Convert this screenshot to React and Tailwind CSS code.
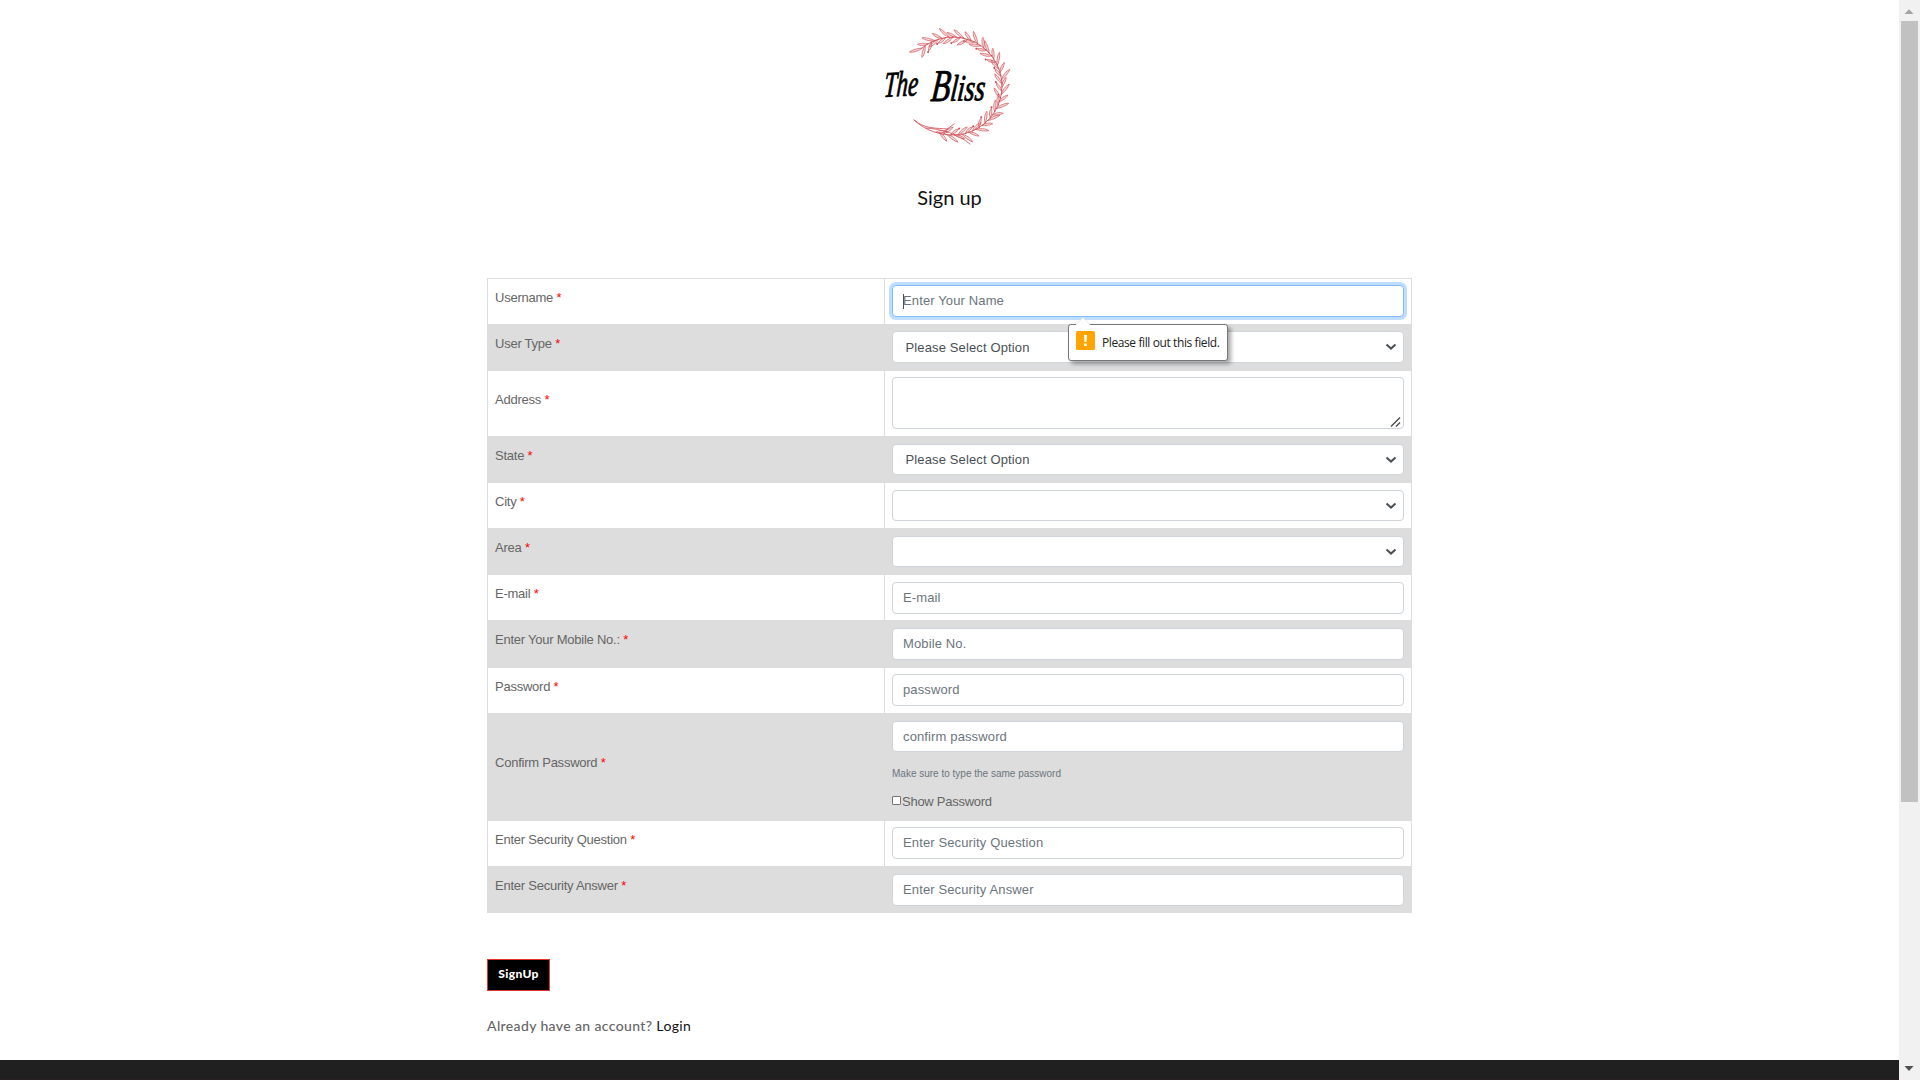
import React from "react";

const CX = 73;
const CY = 66;
const R = 49;
const LEAVES = [];
for (let i = 0; i < 56; i++) {
  const deg = 110 - i * 4.35;
  const a = (deg * Math.PI) / 180;
  const side = i % 2 ? 1 : -1;
  const len = 9.5 + ((i * 5) % 4) * 1.2;
  LEAVES.push({
    x: CX + R * Math.cos(a),
    y: CY + R * Math.sin(a),
    rot: deg - 90 + side * (22 + ((i * 7) % 5) * 6),
    len,
    bud: i % 4 === 0,
  });
}

function Logo() {
  return (
    <svg width="140" height="130" viewBox="0 0 140 130" className="absolute left-[880px] top-5 overflow-visible">
      <g fill="none" stroke="#cf4a50" strokeWidth="0.8" strokeLinecap="round">
        <path d="M34 100C46 111 60 115 73 115A49 49 0 1 0 42 28" />
        <path d="M34 100C44 109 56 108 68 109M46 108C62 109 78 114 90 124M62 113L74 104" />
        {LEAVES.map((l, i) => (
          <g key={i} transform={`translate(${l.x} ${l.y}) rotate(${l.rot})`}>
            <path
              d={`M0 0C3 -1.800 ${l.len - 3} -2 ${l.len} 0C${l.len - 3} 1.200 3 1 0 0Z`}
              fill="#e9a6a8"
              fillOpacity="0.4"
              strokeWidth="0.6"
            />
            {l.bud && <circle cx={l.len + 1} cy="0" r="1" fill="#cf4a50" stroke="none" />}
          </g>
        ))}
      </g>
      <g
        className="fill-black stroke-black font-['Liberation_Serif',serif] italic"
        strokeWidth="0.9"
        strokeLinejoin="round"
      >
        <text x="13" y="77" textLength="34" lengthAdjust="spacingAndGlyphs" transform="rotate(-3 3 77) skewX(-7)">
          <tspan fontSize="36">T</tspan>
          <tspan fontSize="36">he</tspan>
        </text>
        <text x="60" y="81" textLength="54" lengthAdjust="spacingAndGlyphs" transform="rotate(-1 50 80) skewX(-7)">
          <tspan fontSize="45">B</tspan>
          <tspan fontSize="37">liss</tspan>
        </text>
      </g>
    </svg>
  );
}

function Chevron() {
  return (
    <svg width="12" height="8" viewBox="0 0 12 8" className="pointer-events-none absolute right-[7px] top-3">
      <path d="M1.5 1.5L6 5.6L10.5 1.5" fill="none" stroke="#495057" strokeWidth="2" />
    </svg>
  );
}

const box =
  "block w-full rounded-[4px] border border-[#ced4da] bg-white text-[13px] tracking-[0.13px] text-[#495057] outline-none placeholder:text-[#6c757d] placeholder:opacity-100";

function Field({ placeholder, h, type }) {
  return <input type={type || "text"} placeholder={placeholder} className={`${box} ${h} px-[10px]`} />;
}

function Choice({ value, h }) {
  return (
    <div className="relative">
      <select className={`${box} ${h} appearance-none px-[12.5px]`}>
        <option>{value}</option>
      </select>
      <Chevron />
    </div>
  );
}

function Tooltip() {
  return (
    <div className="absolute left-[183px] top-[45px] z-10 flex h-[37px] w-[160px] rounded-[3px] border border-[#767676] bg-white shadow-[3px_3px_4px_rgba(0,0,0,0.35)]">
      <svg width="14" height="8" viewBox="0 0 14 8" className="absolute left-[7px] top-[-8px]">
        <path d="M0 7.5L7 0.5L14 7.5V8H0Z" fill="#fff" />
        <path d="M0 7.5L7 0.5L14 7.5" fill="none" stroke="#d6d6d6" strokeWidth="0.6" />
      </svg>
      <svg width="19" height="19" viewBox="0 0 19 19" className="ml-[7px] mt-[6px] shrink-0">
        <rect width="19" height="19" rx="1.5" fill="#ffa400" />
        <path d="M8 4h3l-.4 7H8.400z M8.200 12.500h2.600v2.500H8.200z" fill="#fff" />
      </svg>
      <span className="ml-[7px] mt-[9px] whitespace-nowrap font-['Open_Sans',sans-serif] text-[12px] leading-[18px] tracking-[-0.4px] text-[#222]">
        Please fill out this field.
      </span>
    </div>
  );
}

function Row({ label, h, grey, labelTop, top, children }) {
  return (
    <div className={`flex ${h} ${grey ? "bg-[#dddddd]" : "bg-white"}`}>
      <div className={`w-[397px] shrink-0 border-r border-[#dddddd] pl-[7px] ${labelTop}`}>
        <label className="block text-[13px] leading-5 tracking-[-0.24px] text-[#666666]">
          {label} <span className="text-[#ff0000]">*</span>
        </label>
      </div>
      <div className={`relative w-[526px] pl-[7px] pr-[7px] ${top}`}>{children}</div>
    </div>
  );
}

export default function App() {
  return (
    <div className="flex h-[1080px] w-[1920px] overflow-hidden bg-white font-['Liberation_Sans',Arial,sans-serif]">
      <div className="relative flex h-full w-[1899px] flex-col">
        <header className="h-[278px]">
          <Logo />
          <h1 className="pt-[183px] text-center font-[Lato,sans-serif] text-[20px] leading-[28px] text-[#111]">Sign up</h1>
        </header>
        <main className="mx-auto w-[925px] flex-1">
          <div className="border-x border-t border-[#dddddd]">
            <Row label="Username" h="h-[45px]" labelTop="pt-[9px]" top="pt-[6px]">
              <input
                type="text"
                placeholder="Enter Your Name"
                className="block h-8 w-full rounded-[4px] border border-[#80bdff] bg-white px-[10px] pb-[2px] text-[13px] tracking-[0.13px] shadow-[0_0_0_3px_#bfdeff] outline-none placeholder:text-[#6c757d] placeholder:opacity-100"
              />
              <span className="absolute left-[18px] top-[15px] h-[15px] w-px bg-[#495057]" />
              <Tooltip />
            </Row>
            <Row label="User Type" grey h="h-[47px]" labelTop="pt-[10px]" top="pt-[7px]">
              <Choice value="Please Select Option" h="h-8 pt-[2px]" />
            </Row>
            <Row label="Address" h="h-[65px]" labelTop="pt-[19px]" top="pt-[6px]">
              <div className="relative">
                <textarea className={`${box} h-[52px] resize-none`} />
                <svg width="12" height="12" viewBox="0 0 12 12" className="absolute bottom-[1px] right-[2px]">
                  <path d="M1 10.500L10 1.500M6 10.500L10 6.500" stroke="#505050" strokeWidth="1.500" />
                </svg>
              </div>
            </Row>
            <Row label="State" grey h="h-[47px]" labelTop="pt-[10px]" top="pt-2">
              <Choice value="Please Select Option" h="h-[31px]" />
            </Row>
            <Row label="City" h="h-[45px]" labelTop="pt-[9px]" top="pt-[7px]">
              <Choice value="" h="h-[31px]" />
            </Row>
            <Row label="Area" grey h="h-[47px]" labelTop="pt-[10px]" top="pt-2">
              <Choice value="" h="h-[31px]" />
            </Row>
            <Row label="E-mail" h="h-[45px]" labelTop="pt-[9px]" top="pt-[7px]">
              <Field placeholder="E-mail" h="h-8 pb-[2px]" />
            </Row>
            <Row label="Enter Your Mobile No.:" grey h="h-[48px]" labelTop="pt-[10px]" top="pt-2">
              <Field placeholder="Mobile No." h="h-8 pb-[2px]" />
            </Row>
            <Row label="Password" h="h-[45px]" labelTop="pt-[9px]" top="pt-[6px]">
              <Field type="password" placeholder="password" h="h-8 pb-[2px]" />
            </Row>
            <Row label="Confirm Password" grey h="h-[108px]" labelTop="pt-[40px]" top="pt-2">
              <Field type="password" placeholder="confirm password" h="h-[31px]" />
              <p className="mt-[16px] text-[10px] leading-[12px] text-[#6c757d]">Make sure to type the same password</p>
              <label className="mt-[12px] flex items-center text-[13px] leading-5 tracking-[-0.26px] text-[#666666]">
                <span className="mb-[3px] mr-px h-[9px] w-[9px] rounded-[1px] border border-[#767676] bg-white" />
                Show Password
              </label>
            </Row>
            <Row label="Enter Security Question" h="h-[45px]" labelTop="pt-[9px]" top="pt-[6px]">
              <Field placeholder="Enter Security Question" h="h-8 pb-[2px]" />
            </Row>
            <Row label="Enter Security Answer" grey h="h-[47px]" labelTop="pt-[10px]" top="pt-2">
              <Field placeholder="Enter Security Answer" h="h-8 pb-[2px]" />
            </Row>
          </div>
          <button className="mt-[46px] block h-8 w-[63px] border border-[#e7322d] bg-black pb-[2px] font-[Lato,sans-serif] text-[12px] font-black leading-none tracking-[0.4px] text-white">
            SignUp
          </button>
          <p className="mt-[25px] whitespace-nowrap font-[Lato,sans-serif] text-[14px] font-medium leading-5 tracking-[0.37px] text-[#666666]">
            Already have an account? <a className="font-normal text-[#111]">Login</a>
          </p>
        </main>
        <footer className="h-5 border-b border-[#2b1f22] bg-[#202020]" />
      </div>
      <aside className="flex h-full w-[21px] flex-col bg-[#f1f1f1]">
        <svg width="21" height="21" viewBox="0 0 21 21">
          <path d="M5.500 14H14.500L10 9.200Z" fill="#a3a3a3" />
        </svg>
        <div className="ml-[2px] h-[781px] w-[17px] bg-[#c1c1c1]" />
        <div className="flex-1" />
        <svg width="21" height="21" viewBox="0 0 21 21">
          <path d="M5.500 7H14.500L10 12Z" fill="#505050" />
        </svg>
      </aside>
    </div>
  );
}
